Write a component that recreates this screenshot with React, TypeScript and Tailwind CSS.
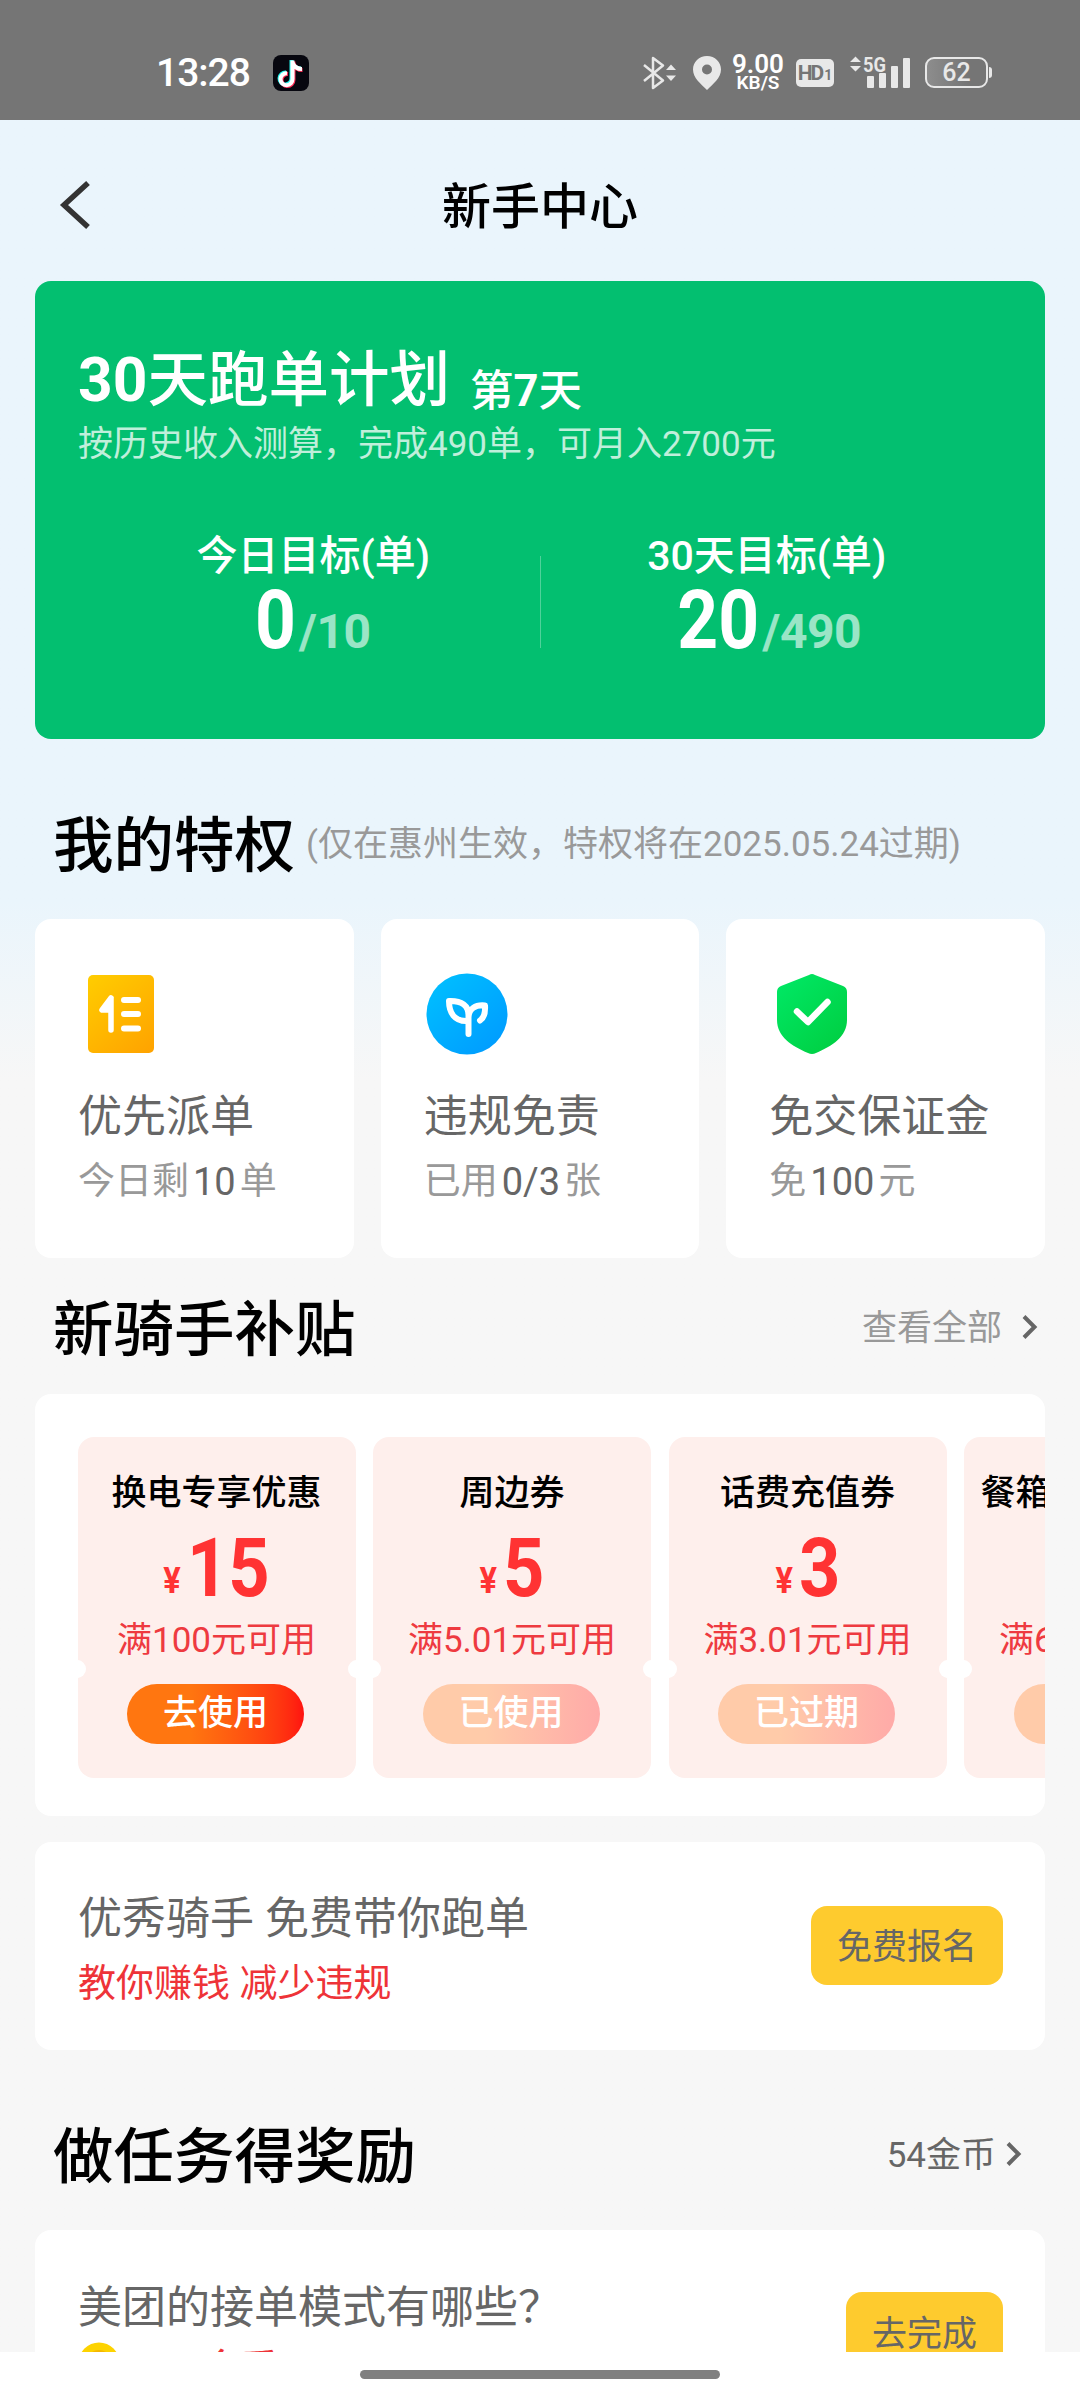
import React from "react"
import clsx from "clsx"

type Privilege = {
  icon: React.ReactNode
  title: string
  before: string
  value: string
  after: string
}

type Coupon = {
  name: string
  amount: string
  rule: string
  action: string
  active?: boolean
}

const privileges: Privilege[] = [
  { icon: <OrderIcon />, title: "优先派单", before: "今日剩", value: "10", after: "单" },
  { icon: <SproutIcon />, title: "违规免责", before: "已用", value: "0/3", after: "张" },
  { icon: <ShieldIcon />, title: "免交保证金", before: "免", value: "100", after: "元" },
]

const coupons: Coupon[] = [
  { name: "换电专享优惠", amount: "15", rule: "满100元可用", action: "去使用", active: true },
  { name: "周边券", amount: "5", rule: "满5.01元可用", action: "已使用" },
  { name: "话费充值券", amount: "3", rule: "满3.01元可用", action: "已过期" },
  { name: "餐箱清洁优惠券", amount: "6", rule: "满6.01元可用", action: "已过期" },
]

/* ICONS */

function OrderIcon() {
  return (
    <svg width="88" height="88" viewBox="0 0 88 88" fill="none">
      <defs>
        <linearGradient id="order" x1="11" y1="5" x2="77" y2="83" gradientUnits="userSpaceOnUse">
          <stop stopColor="#ffcd00" />
          <stop offset="1" stopColor="#ffa200" />
        </linearGradient>
      </defs>
      <rect x="11" y="5" width="66" height="78" rx="5" fill="url(#order)" />
      <path
        d="M34 28v32M34 28 25 40h9"
        stroke="#fff"
        strokeWidth="5.5"
        strokeLinecap="round"
        strokeLinejoin="round"
      />
      <path d="M34 27 24 41h10z" fill="#fff" />
      <path d="M47 30h14M47 44h14M47 58.500h14" stroke="#fff" strokeWidth="6" strokeLinecap="round" />
    </svg>
  )
}

function SproutIcon() {
  return (
    <svg width="88" height="88" viewBox="0 0 88 88" fill="none">
      <defs>
        <linearGradient id="sprout" x1="14" y1="12" x2="74" y2="76" gradientUnits="userSpaceOnUse">
          <stop stopColor="#00bdff" />
          <stop offset="1" stopColor="#009dff" />
        </linearGradient>
      </defs>
      <circle cx="44" cy="44" r="40.500" fill="url(#sprout)" />
      <path
        d="M45.500 64V45C45.500 36 39 30.500 26 31C26 43 32 51 43 51M45.500 51V47C46 39 52 34.500 62 35.500C62.500 43 61 48 57 50.500"
        stroke="#fff"
        strokeWidth="6"
        strokeLinecap="round"
        strokeLinejoin="round"
      />
    </svg>
  )
}

function ShieldIcon() {
  return (
    <svg width="88" height="88" viewBox="0 0 88 88" fill="none">
      <defs>
        <linearGradient id="shield" x1="9" y1="10" x2="74" y2="76" gradientUnits="userSpaceOnUse">
          <stop stopColor="#00e865" />
          <stop offset="1" stopColor="#00cf42" />
        </linearGradient>
      </defs>
      <path
        d="M41 5Q44 3 47 5L75 16Q79 17.500 79 22V50C79 67 64 76 48 83Q44 85 40 83C24 76 9 67 9 50V22Q9 17.500 13 16Z"
        fill="url(#shield)"
      />
      <path
        d="M29 41.500 40 52 59.500 32"
        stroke="#fff"
        strokeWidth="6.500"
        strokeLinecap="round"
        strokeLinejoin="round"
      />
    </svg>
  )
}

function Arrow({ className }: { className: string }) {
  return (
    <svg className={className} width="16" height="24" viewBox="0 0 16 24" fill="none">
      <path d="M2 1.500 12.500 12 2 22.500" stroke="#666" strokeWidth="4" />
    </svg>
  )
}

function NoteIcon() {
  return (
    <svg width="36" height="36" viewBox="0 0 36 36" fill="none">
      <rect width="36" height="36" rx="8" fill="#07070f" />
      <g strokeWidth="4">
        <path d="M18.500 5V23.500A6 6 0 1 1 13 17.500M18.500 7C20 11.500 23.500 13.500 28 13.500" stroke="#25f4ee" />
        <path d="M20.500 6.500V25A6 6 0 1 1 15 19M20.500 8.500C22 13 25 15 29.500 15" stroke="#fe2c55" />
        <path d="M19.500 5.500V24A6 6 0 1 1 14 18.200M19.500 7.500C21 12 24.500 14 29 14" stroke="#fff" />
      </g>
    </svg>
  )
}

function StatusBar() {
  return (
    <div className="flex h-[120px] shrink-0 items-center bg-[#757575] pt-[25px] pl-[156px] text-white">
      <span className="w-[117px] text-[39px]/[40px] font-medium tracking-[-1px]">13:28</span>
      <NoteIcon />

      <svg className="ml-[332px]" width="38" height="36" viewBox="0 0 38 36" fill="none">
        <path
          d="M3 10 22 25.500 12 33V3L22 10.500 3 26"
          stroke="#e8e8e8"
          strokeWidth="2.500"
          strokeLinejoin="round"
        />
        <path d="M25 15 30 9.500 35 15zM25 20.500 30 26 35 20.500z" fill="#e8e8e8" />
      </svg>
      <svg className="ml-[13px]" width="30" height="36" viewBox="0 0 30 36">
        <path
          d="M15 1C7 1 1 7 1 14.500C1 23 9 29 15 35C21 29 29 23 29 14.500C29 7 23 1 15 1ZM15 9.500A5 5 0 1 1 15 19.500A5 5 0 1 1 15 9.500Z"
          fill="#e8e8e8"
        />
      </svg>
      <div className="ml-[9px] flex w-[54px] flex-col items-center font-semibold">
        <span className="text-[26px]/[20px]">9.00</span>
        <span className="text-[19px]/[18px]">KB/S</span>
      </div>
      <div className="ml-[11px] flex h-7 w-[38px] items-baseline justify-center rounded-[5px] bg-[#e8e8e8] font-bold text-[#757575]">
        <span className="text-[21px]/[28px] tracking-[-2px]">HD</span>
        <span className="ml-[2px] text-[14px]/[28px]">1</span>
      </div>
      <svg className="ml-[15px]" width="62" height="36" viewBox="0 0 62 36" fill="#e8e8e8">
        <path d="M1 7 6.500 1.500 12 7zM1 11 6.500 16.500 12 11z" />
        <text x="14" y="17" fontSize="21" fontWeight="700" textLength="23" lengthAdjust="spacingAndGlyphs">
          5G
        </text>
        <rect x="18" y="21" width="7" height="12" rx="1" />
        <rect x="30" y="18" width="7" height="15" rx="1" />
        <rect x="42" y="11" width="7" height="22" rx="1" />
        <rect x="54" y="3" width="7" height="30" rx="1" />
      </svg>
      <div className="ml-[14px] flex h-[31px] w-[63px] items-center justify-center rounded-[9px] border-2 border-[#e8e8e8] bg-linear-to-r from-[#8d8d8d] to-[#757575] to-70%">
        <span className="text-[25px]/[26px] font-medium text-[#e8e8e8]">62</span>
      </div>
      <div className="ml-px h-[11px] w-[3px] rounded-r-sm bg-[#e8e8e8]" />
    </div>
  )
}

function Goal({ label, done, total }: { label: string; done: string; total: string }) {
  return (
    <div className="flex flex-1 flex-col items-center">
      <span className="text-[41px]/[48px] font-medium">{label}</span>
      <div className="mt-[2px] -ml-[7px] flex h-[76px] items-baseline font-bold">
        <span className="origin-right scale-x-[0.87] text-[82px]/[76px]">{done}</span>
        <span className="ml-[3px] text-[48px]/[76px] tracking-[-0.5px] opacity-60">/{total}</span>
      </div>
    </div>
  )
}

function PrivilegeCard({ icon, title, before, value, after }: Privilege) {
  return (
    <div className="flex h-[339px] flex-col rounded-2xl bg-white pt-[51px] pl-[42px]">
      {icon}
      <span className="mt-[31px] pl-px text-[44px]/[56px] text-[#666]">{title}</span>
      <div className="mt-[11px] flex gap-[4px] pl-px text-[37px]/[52px] text-[#999]">
        <span>{before}</span>
        <span className="text-[38px] text-[#666]">{value}</span>
        <span>{after}</span>
      </div>
    </div>
  )
}

function CouponCard({ name, amount, rule, action, active }: Coupon) {
  return (
    <div className="relative flex h-[341px] w-[278px] shrink-0 flex-col items-center overflow-hidden rounded-2xl bg-[#feefec] pt-[35px]">
      <span className="text-[35px]/[44px] font-medium whitespace-nowrap text-black">{name}</span>
      <div className="mt-[12px] flex h-[80px] scale-x-[0.88] items-baseline gap-[7px] font-bold text-[#ff3333]">
        <span className="relative -top-[3px] text-[37px]/[80px]">¥</span>
        <span className="text-[82px]/[80px]">{amount}</span>
      </div>
      <span className="mt-[11px] text-[35px]/[44px] text-[#ee3a40]">{rule}</span>
      <div
        className={clsx(
          "mt-[21px] mr-[2px] flex h-[60px] w-[177px] items-center justify-center rounded-full bg-linear-to-r from-35%",
          active ? "from-[#ff7610] to-[#ff1010]" : "from-[#ffcba9] to-[#ffaaa8]"
        )}
      >
        <span className="text-[35px]/[44px] font-medium text-white">{action}</span>
      </div>

      {/* ticket notches */}
      <i className="absolute top-[223px] left-[-10px] size-[18px] rounded-full bg-white" />
      <i className="absolute top-[223px] right-[-10px] size-[18px] rounded-full bg-white" />
    </div>
  )
}

function SectionTitle({ children }: { children: React.ReactNode }) {
  return <h2 className="pt-[2px] text-[60.5px]/[72px] font-medium text-black">{children}</h2>
}

export default function App(): React.JSX.Element {
  return (
    <div className="flex h-[2400px] w-[1080px] flex-col overflow-hidden bg-white font-[Roboto,'Noto_Sans_CJK_SC',sans-serif]">
      <StatusBar />

      <main className="h-[2232px] shrink-0 overflow-hidden bg-linear-to-b from-[#eaf5fc] from-[780px] to-[#f7f7f7] to-[960px] px-[35px]">
        {/* HEADER */}
        <header className="grid h-[161px] grid-cols-[60px_1fr_60px] items-center pt-[11px]">
          <svg className="mb-[2px] ml-[24px]" width="32" height="50" viewBox="0 0 32 50" fill="none">
            <path d="M29 3 5 25 29 47" stroke="#333" strokeWidth="5.500" />
          </svg>
          <h1 className="pt-[4px] text-center text-[49px]/[60px] font-medium text-black">新手中心</h1>
        </header>

        {/* 30 DAY PLAN */}
        <section className="flex h-[458px] flex-col rounded-2xl bg-[#03bf70] pt-[62px] text-white">
          <div className="flex items-baseline pl-[43px] font-medium">
            <span className="text-[60.5px]/[76px] font-bold">
              30<span className="font-medium">天跑单计划</span>
            </span>
            <span className="relative top-[5px] ml-[20px] text-[43.5px]/[60px]">
              第<span className="font-bold">7</span>天
            </span>
          </div>
          <p className="mt-[4px] pl-[43px] text-[35px]/[44px] text-white/75">
            按历史收入测算，完成490单，可月入2700元
          </p>
          <div className="mt-[65px] flex px-[52px]">
            <Goal label="今日目标(单)" done="0" total="10" />
            <div className="mt-[24px] h-[92px] w-px bg-white/30" />
            <Goal label="30天目标(单)" done="20" total="490" />
          </div>
        </section>

        {/* PRIVILEGES */}
        <section>
          <div className="flex h-[180px] items-center pt-[34px] pl-[18px]">
            <SectionTitle>我的特权</SectionTitle>
            <span className="mb-[2px] ml-[11px] text-[35px]/[44px] text-[#999]">
              (仅在惠州生效，特权将在2025.05.24过期)
            </span>
          </div>
          <div className="grid grid-cols-3 gap-[27px]">
            {privileges.map((item) => (
              <PrivilegeCard key={item.title} {...item} />
            ))}
          </div>
        </section>

        {/* COUPONS */}
        <section>
          <div className="flex h-[136px] items-center justify-between pt-[7px] pl-[18px]">
            <SectionTitle>新骑手补贴</SectionTitle>
            <div className="mb-[2px] flex items-center text-[35px]/[44px] text-[#999]">
              查看全部
              <Arrow className="mr-[7px] mb-[4px] ml-[20px]" />
            </div>
          </div>
          <div className="flex h-[422px] gap-[17.500px] overflow-hidden rounded-2xl bg-white pt-[43px] pl-[42.500px]">
            {coupons.map((item) => (
              <CouponCard key={item.name} {...item} />
            ))}
          </div>
        </section>

        {/* MENTOR */}
        <section className="mt-[26px] flex h-[208px] items-center justify-between rounded-2xl bg-white pr-[42px] pl-[43px]">
          <div className="flex flex-col pt-[8px]">
            <span className="text-[44px]/[60px] text-[#666]">优秀骑手 免费带你跑单</span>
            <span className="mt-[6px] text-[38px]/[56px] text-[#ee3338]">教你赚钱 减少违规</span>
          </div>
          <button className="mb-[2px] h-[79px] w-[192px] rounded-2xl bg-[#fecb2e] pt-[6px] text-[35px]/[44px] text-[#666]">
            免费报名
          </button>
        </section>

        {/* TASKS */}
        <section>
          <div className="flex h-[180px] items-center justify-between pt-[34px] pl-[18px]">
            <SectionTitle>做任务得奖励</SectionTitle>
            <div className="mb-[2px] flex items-center text-[35px]/[44px] text-[#666]">
              54金币
              <Arrow className="mr-[23px] mb-[4px] ml-[10px]" />
            </div>
          </div>
          <div className="flex h-[208px] justify-between rounded-2xl bg-white pr-[42px] pl-[43px]">
            <div className="flex flex-col pt-[48px]">
              <span className="text-[44px]/[60px] text-[#666]">美团的接单模式有哪些？</span>
              <div className="mt-[4px] flex items-start gap-[20px]">
                <svg width="42" height="42" viewBox="0 0 42 42">
                  <circle cx="21" cy="21" r="20.500" fill="#fdd300" />
                  <circle cx="21" cy="21" r="13" fill="#f5b800" />
                </svg>
                <span className="pt-[6px] text-[37px]/[42px] font-medium text-[#ee3338]">+10金币</span>
              </div>
            </div>
            <button className="mt-[62px] h-[79px] w-[157px] rounded-2xl bg-[#fecb2e] pt-[7px] text-[35px]/[44px] text-[#666]">
              去完成
            </button>
          </div>
        </section>
      </main>

      {/* HOME INDICATOR */}
      <div className="flex h-12 shrink-0 justify-center bg-white pt-[18px]">
        <div className="h-[9px] w-[360px] rounded-full bg-[#808080]" />
      </div>
    </div>
  )
}
